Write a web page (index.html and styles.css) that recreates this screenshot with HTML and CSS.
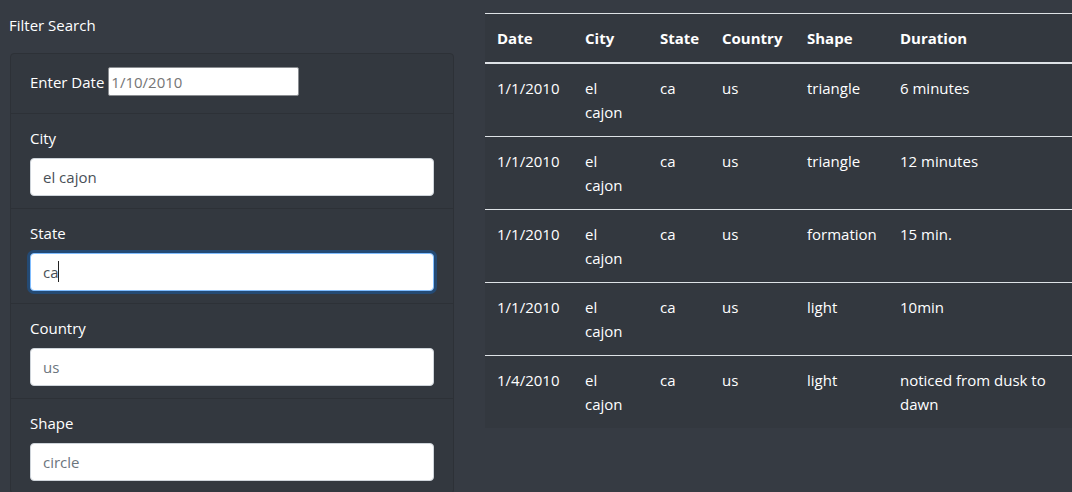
FILE: index.html
```html
<!DOCTYPE html>
<html lang="en">
<head>
<meta charset="utf-8">
<title>UFO Sightings – Filter Search</title>
<link rel="stylesheet" href="styles.css">
</head>
<body>
<div class="page">
  <aside class="filters">
    <h2 class="filters-title">Filter Search</h2>
    <ul class="filter-list">
      <li class="filter-item filter-item--inline">
        <label class="filter-label" for="datetime">Enter Date</label>
        <input class="date-input" id="datetime" type="text" placeholder="1/10/2010">
      </li>
      <li class="filter-item">
        <label class="filter-label" for="city">City</label>
        <input class="form-field" id="city" type="text" value="el cajon">
      </li>
      <li class="filter-item">
        <label class="filter-label" for="state">State</label>
        <div class="field-wrap">
          <input class="form-field form-field--focus" id="state" type="text" value="ca">
          <span class="caret"></span>
        </div>
      </li>
      <li class="filter-item">
        <label class="filter-label" for="country">Country</label>
        <input class="form-field" id="country" type="text" placeholder="us">
      </li>
      <li class="filter-item">
        <label class="filter-label" for="shape">Shape</label>
        <input class="form-field" id="shape" type="text" placeholder="circle">
      </li>
    </ul>
  </aside>
  <main class="results">
    <table class="ufo-table">
      <colgroup>
        <col class="col-date">
        <col class="col-city">
        <col class="col-state">
        <col class="col-country">
        <col class="col-shape">
        <col class="col-duration">
      </colgroup>
      <thead>
        <tr><th>Date</th><th>City</th><th>State</th><th>Country</th><th>Shape</th><th>Duration</th></tr>
      </thead>
      <tbody>
        <tr><td>1/1/2010</td><td>el cajon</td><td>ca</td><td>us</td><td>triangle</td><td>6 minutes</td></tr>
        <tr><td>1/1/2010</td><td>el cajon</td><td>ca</td><td>us</td><td>triangle</td><td>12 minutes</td></tr>
        <tr><td>1/1/2010</td><td>el cajon</td><td>ca</td><td>us</td><td>formation</td><td>15 min.</td></tr>
        <tr><td>1/1/2010</td><td>el cajon</td><td>ca</td><td>us</td><td>light</td><td>10min</td></tr>
        <tr><td>1/4/2010</td><td>el cajon</td><td>ca</td><td>us</td><td>light</td><td>noticed from dusk to dawn</td></tr>
      </tbody>
    </table>
  </main>
</div>
</body>
</html>
```
FILE: styles.css
```css
html, body {
  margin: 0;
  height: 100%;
  overflow: hidden;
}

body {
  background: #363b43;
  color: #fff;
  font-family: "Open Sans", "Noto Sans", sans-serif;
  font-size: 15px;
  line-height: 24px;
}

.page {
  display: grid;
  grid-template-columns: 444px 587px;
  column-gap: 31px;
  padding: 13px 0 0 10px;
  align-items: start;
}

.filters-title {
  margin: 0 0 16px -1px;
  font-size: 15px;
  font-weight: 400;
  line-height: 24px;
}

.filter-list {
  list-style: none;
  margin: 0;
  padding: 0;
  background: #33383f;
  border: 1px solid #2d3137;
  border-radius: 4px;
}

.filter-item {
  display: flex;
  flex-direction: column;
  padding: 12px 19px;
  border-top: 1px solid #2d3137;
}

.filter-item:first-child {
  border-top: 0;
}

.filter-item--inline {
  flex-direction: row;
  align-items: center;
  padding: 13px 19px 17px;
  height: 29px;
  box-sizing: content-box;
}

.filter-label {
  display: block;
  color: #fff;
}

.filter-item .filter-label {
  margin-bottom: 8px;
}

.filter-item--inline .filter-label {
  margin: 0 4px 0 0;
}

.date-input {
  box-sizing: border-box;
  width: 191px;
  height: 29px;
  padding: 1px 2px;
  border: 1px solid #8a8d91;
  border-radius: 2px;
  background: #fff;
  font-family: inherit;
  font-size: 15px;
  color: #444;
}

.date-input::placeholder {
  color: #757575;
}

.field-wrap {
  position: relative;
}

.form-field {
  box-sizing: border-box;
  display: block;
  width: 100%;
  height: 38px;
  padding: 6px 12px;
  border: 1px solid #ced4da;
  border-radius: 4px;
  background: #fff;
  font-family: inherit;
  font-size: 15px;
  line-height: 24px;
  color: #495057;
  outline: none;
}

.form-field::placeholder {
  color: #6c757d;
}

.form-field--focus {
  border-color: #80bdff;
  box-shadow: 0 0 0 3px rgba(0, 123, 255, 0.28);
  caret-color: transparent;
}

.caret {
  position: absolute;
  left: 28px;
  top: 8px;
  width: 1px;
  height: 21px;
  background: #222;
}

.ufo-table {
  width: 587px;
  table-layout: fixed;
  border-collapse: collapse;
  background: #33383f;
  color: #fff;
}

.col-date { width: 88px; }
.col-city { width: 75px; }
.col-state { width: 62px; }
.col-country { width: 85px; }
.col-shape { width: 93px; }
.col-duration { width: 184px; }

.ufo-table th,
.ufo-table td {
  padding: 12px;
  text-align: left;
  vertical-align: top;
  border-top: 1px solid #dee2e6;
}

.ufo-table th {
  font-weight: 700;
  vertical-align: bottom;
  border-bottom: 2px solid #dee2e6;
}
```
